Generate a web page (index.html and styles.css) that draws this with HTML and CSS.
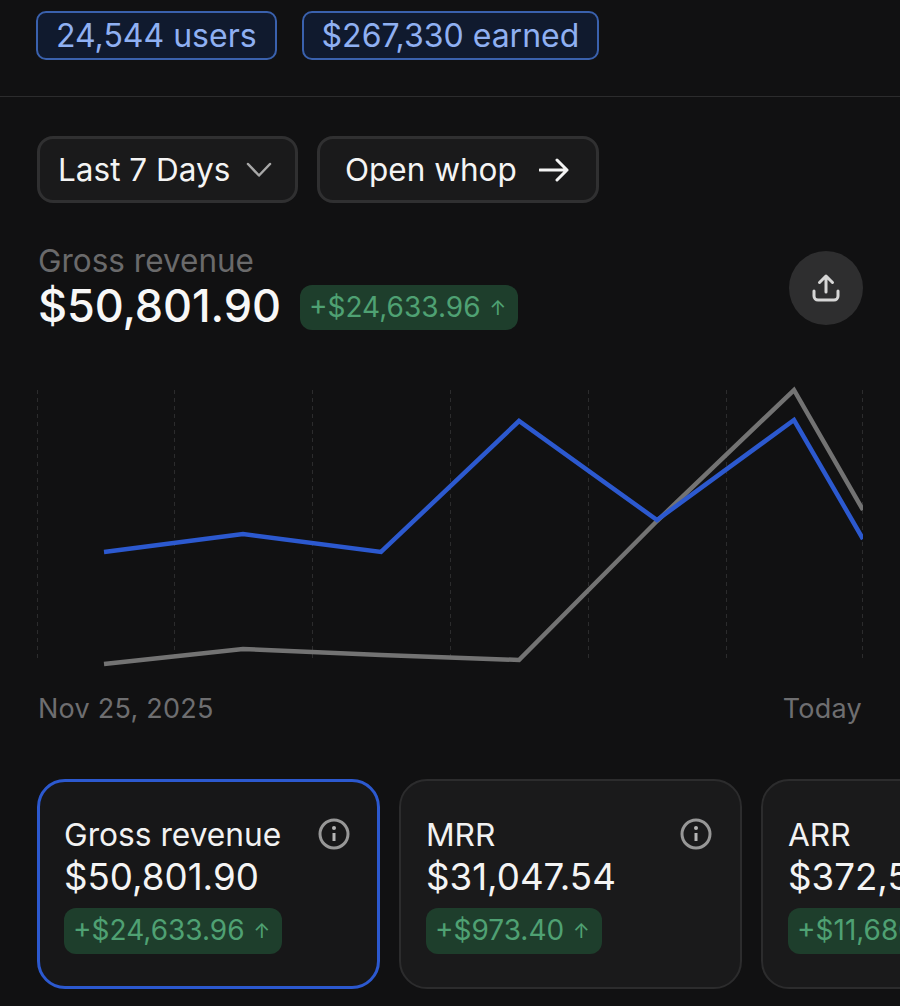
FILE: index.html
```html
<!DOCTYPE html>
<html lang="en">
<head>
<meta charset="UTF-8" />
<title>Whop dashboard</title>
<link rel="stylesheet" href="styles.css">
</head>
<body>
  <div class="stats-row">
    <span class="stat-pill">24,544 users</span>
    <span class="stat-pill">$267,330 earned</span>
  </div>

  <div class="actions">
    <button class="action-btn range-btn">
      Last 7 Days
      <svg class="chevron" width="26" height="16" viewBox="0 0 26 16"><path d="M2 2l11 11.500L24 2" /></svg>
    </button>
    <button class="action-btn open-btn">
      Open whop
      <svg class="arrow" width="30" height="24" viewBox="0 0 30 24"><path d="M1 12h27M18 2l10 10-10 10" /></svg>
    </button>
  </div>

  <div class="summary">
    <div>
      <div class="summary-label">Gross revenue</div>
      <div class="summary-line">
        <span class="summary-value">$50,801.90</span>
        <span class="delta delta-big">+$24,633.96 <span class="up">↑</span></span>
      </div>
    </div>
    <button class="share-btn">
      <svg width="30" height="30" viewBox="0 0 30 30"><path d="M15 19V3M8.500 9.500L15 3l6.500 6.500M3 18v5a4 4 0 0 0 4 4h16a4 4 0 0 0 4-4v-5" /></svg>
    </button>
  </div>

  <svg class="chart" width="826" height="285" viewBox="0 0 826 285">
    <g class="grid-lines">
      <path d="M0.500 5V275" />
      <path d="M137.500 5V275" />
      <path d="M275.500 5V275" />
      <path d="M413.500 5V275" />
      <path d="M551.500 5V275" />
      <path d="M689.500 5V275" />
      <path d="M825.500 5V275" />
    </g>
    <polyline class="line-gray" points="67,279 206,264 344,270 482,275 620,136 757,5 826,125" />
    <polyline class="line-blue" points="67,167 206,149 344,167 482,36 620,135 757,35 826,154" />
  </svg>

  <div class="chart-dates">
    <span>Nov 25, 2025</span>
    <span>Today</span>
  </div>

  <div class="cards">
    <div class="card active">
      <div class="card-top">
        <span class="card-title">Gross revenue</span>
        <svg class="info" width="32" height="32" viewBox="0 0 32 32"><circle cx="16" cy="16" r="14" /><path d="M16 15v8" /><circle class="dot" cx="16" cy="10" r="2" /></svg>
      </div>
      <div class="card-value">$50,801.90</div>
      <span class="delta">+$24,633.96 <span class="up">↑</span></span>
    </div>
    <div class="card">
      <div class="card-top">
        <span class="card-title">MRR</span>
        <svg class="info" width="32" height="32" viewBox="0 0 32 32"><circle cx="16" cy="16" r="14" /><path d="M16 15v8" /><circle class="dot" cx="16" cy="10" r="2" /></svg>
      </div>
      <div class="card-value">$31,047.54</div>
      <span class="delta">+$973.40 <span class="up">↑</span></span>
    </div>
    <div class="card">
      <div class="card-top">
        <span class="card-title">ARR</span>
        <svg class="info" width="32" height="32" viewBox="0 0 32 32"><circle cx="16" cy="16" r="14" /><path d="M16 15v8" /><circle class="dot" cx="16" cy="10" r="2" /></svg>
      </div>
      <div class="card-value">$372,570.48</div>
      <span class="delta">+$11,680.80 <span class="up">↑</span></span>
    </div>
  </div>
</body>
</html>
```

FILE: styles.css
```css
/* Dark page */
html, body {
  height: 100%;
}
body {
  background: #111112;
  font-family: Inter, 'Liberation Sans', sans-serif;
  color: #f4f4f4;
  margin: 0;
  overflow: hidden;
}

/* Top pills */
.stats-row {
  display: flex;
  gap: 25px;
  padding: 11px 36px 36px;
  border-bottom: 1px solid #2c2c2d;
}
.stat-pill {
  height: 49px;
  box-sizing: border-box;
  display: flex;
  align-items: center;
  padding: 0 18px;
  font-size: 32px;
  color: #8fb0f2;
  background: #101a2e;
  border: 2px solid #3a61ad;
  border-radius: 10px;
}

/* Range + open buttons */
.actions {
  display: flex;
  gap: 19px;
  padding: 39px 37px 0;
}
.action-btn {
  height: 67px;
  box-sizing: border-box;
  display: flex;
  align-items: center;
  font-family: inherit;
  font-size: 31.500px;
  color: #f4f4f4;
  background: #1a1a1b;
  border: 3px solid #303031;
  border-radius: 16px;
}
.range-btn {
  width: 261px;
  padding: 0 0 0 18px;
  gap: 16px;
}
.open-btn {
  width: 282px;
  padding: 0 0 0 25px;
  gap: 22px;
}
.chevron path {
  fill: none;
  stroke: #a8a8a8;
  stroke-width: 2.500;
  stroke-linecap: round;
  stroke-linejoin: round;
}
.arrow path {
  fill: none;
  stroke: #f4f4f4;
  stroke-width: 3;
  stroke-linecap: round;
  stroke-linejoin: round;
}

/* Headline number */
.summary {
  display: flex;
  justify-content: space-between;
  padding: 40px 37px 0 38px;
}
.summary-label {
  font-size: 31.500px;
  line-height: 36px;
  color: #6a6a6b;
}
.summary-line {
  display: flex;
  align-items: center;
  gap: 19px;
  margin-top: 2px;
}
.summary-value {
  font-size: 45px;
  line-height: 50px;
  font-weight: 500;
  letter-spacing: -0.100px;
  color: #f7f7f7;
}
.share-btn {
  width: 74px;
  height: 74px;
  margin-top: 8px;
  padding: 0;
  display: flex;
  align-items: center;
  justify-content: center;
  background: #2e2e2f;
  border: none;
  border-radius: 50%;
}
.share-btn path {
  fill: none;
  stroke: #d6d6d6;
  stroke-width: 3;
  stroke-linecap: round;
  stroke-linejoin: round;
}

/* Green delta badge */
.delta {
  display: inline-block;
  height: 46px;
  box-sizing: border-box;
  padding: 0 12px 0 9px;
  font-size: 28px;
  line-height: 45px;
  color: #4fa173;
  background: #1e3e2c;
  border-radius: 12px;
  white-space: nowrap;
}
.delta-big {
  height: 45px;
  margin-top: 3px;
}
.delta .up {
  font-size: 20px;
  vertical-align: 2px;
  margin-left: 1px;
}

/* Chart */
.chart {
  display: block;
  margin: 54px 0 0 37px;
}
.grid-lines path {
  stroke: #2c2c2d;
  stroke-width: 1;
  stroke-dasharray: 4 4;
}
.line-gray,
.line-blue {
  fill: none;
  stroke-linejoin: miter;
  stroke-width: 4.500;
}
.line-gray {
  stroke: #737373;
}
.line-blue {
  stroke: #2c59cf;
}
.chart-dates {
  display: flex;
  justify-content: space-between;
  padding: 21px 38px 0;
  font-size: 27px;
  letter-spacing: 0.250px;
  line-height: 36px;
  color: #6e6e70;
}

/* Metric cards */
.cards {
  display: flex;
  gap: 19.500px;
  padding: 52px 0 0 37px;
}
.card {
  flex: 0 0 auto;
  width: 342.500px;
  height: 210px;
  box-sizing: border-box;
  padding: 36px 28px 0 25px;
  background: #1a1a1b;
  border: 2px solid #2c2c2d;
  border-radius: 28px;
}
.card.active {
  border: 3px solid #2c59cf;
  background: #171718;
  padding: 35px 27px 0 24px;
}
.card-top {
  display: flex;
  justify-content: space-between;
  align-items: center;
  height: 34px;
}
.card-title {
  font-size: 31.700px;
  color: #f2f2f2;
}
.card-value {
  font-size: 36.700px;
  line-height: 46px;
  margin-top: 3px;
  margin-bottom: 8px;
  color: #f4f4f4;
}
.info circle {
  fill: none;
  stroke: #979797;
  stroke-width: 3;
}
.info path {
  stroke: #b5b5b5;
  stroke-width: 3;
}
.info .dot {
  fill: #b5b5b5;
  stroke: none;
}
```
